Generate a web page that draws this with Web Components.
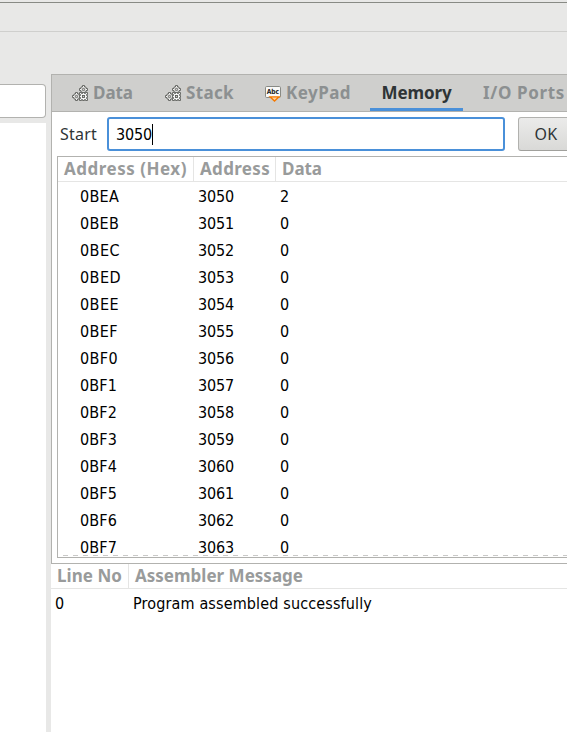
<!DOCTYPE html>
<html lang="en"><head><meta charset="utf-8"><title>Memory</title>
<style>html,body{margin:0;height:732px;overflow:hidden;background:#e8e8e7}</style></head>
<body><sim-window></sim-window>
<script>
const define=(name,html,init)=>customElements.define(name,class extends HTMLElement{
  connectedCallback(){
    if(this.shadowRoot)return;
    const t=document.createElement('template');t.innerHTML=html;
    this.attachShadow({mode:'open'}).append(t.content.cloneNode(true));
    if(init)init.call(this,this.shadowRoot);
  }
});

// Single-line label whose tracking is adjusted to reach the width in "w".
define('ui-label',`<style>:host{display:inline-block;white-space:pre;line-height:20px}span{display:inline-block}</style><span><slot></slot></span>`,
function(r){
  const w=+this.getAttribute('w');if(!w)return;
  const s=r.querySelector('span'),n=this.textContent.length;
  s.style.letterSpacing=((w-s.getBoundingClientRect().width)/n)+'px';
});

define('gears-icon',`<style>:host{display:block;width:16px;height:17px}svg{display:block}</style>
<svg width="16" height="17" viewBox="0 0 16 17">
<g fill="#f4f4f3" stroke="#5c5e5a" stroke-width=".9">
<path d="M10.500 .5h2v1.500h1.500v1.500h1.500v2H14V7h-1.500v1.500h-2V7H9V5.500H7.500v-2H9V2h1.500z"/>
<path d="M3.500 7.500h2V9H7v1.500h1.500v2H7V14H5.500v1.500h-2V14H2v-1.500H.5v-2H2V9h1.500z"/>
<path d="M7.500 7.500h2v1h1v-1h2v1h1v-1h2v2h-1v1h1v2h-1v1h1v2h-2v-1h-1v1h-2v-1h-1v1h-2v-2h1v-1h-1v-2h1v-1h-1z"/></g>
<g fill="#cfcfcd" stroke="#5c5e5a" stroke-width=".9"><circle cx="11.500" cy="4.500" r="1.200"/><circle cx="4.500" cy="11.500" r="1.200"/><rect x="10.500" y="10.500" width="2" height="2"/></g></svg>`);

define('keypad-icon',`<style>:host{display:block;width:16px;height:17px}svg{display:block}text{font:bold 7px "DejaVu Sans Condensed","DejaVu Sans",sans-serif;fill:#222}</style>
<svg width="16" height="17" viewBox="0 0 16 17"><rect x=".5" y="1.500" width="15" height="11" rx="1.200" fill="#fafaf8" stroke="#888a85"/>
<text x="1.700" y="9.200" textLength="12.500" lengthAdjust="spacingAndGlyphs">Abc</text>
<path d="M5 11.800h9L9.500 16z" fill="#fcd0a0" stroke="#f57900" stroke-width="1.300"/></svg>`);

define('tab-bar',`<style>:host{display:block;height:36px;background:#cfcfcd;border-top:1px solid #b2b2af;border-bottom:1px solid #b2b2af;overflow:hidden}
nav{display:flex;height:36px;padding-left:20px}
div{display:flex;align-items:center;flex:none;box-sizing:border-box;gap:5px;color:#8c9091;font:bold 17px "Noto Sans",sans-serif}
.active{color:#2e3436;border-bottom:3px solid #4a90d9;width:93px;justify-content:center;padding-top:3px}
.io{width:110px;padding-left:20px}</style>
<nav><div style="width:93px"><gears-icon></gears-icon><ui-label w="40">Data</ui-label></div>
<div style="width:100px"><gears-icon></gears-icon><ui-label w="48">Stack</ui-label></div>
<div style="width:105px"><keypad-icon></keypad-icon><ui-label w="65">KeyPad</ui-label></div>
<div class="active"><ui-label w="70">Memory</ui-label></div>
<div class="io"><ui-label w="82">I/O Ports</ui-label></div></nav>`);

define('search-row',`<style>:host{display:flex;box-sizing:content-box;height:34px;padding:5px 0 5px 8px;font:16px "Noto Sans",sans-serif;color:#2e3436;align-items:center}
.start{width:47px;flex:none}
.field{flex:none;width:398px;height:34px;box-sizing:border-box;border:2px solid #4a90d9;border-radius:3px;display:flex;align-items:center;padding:1px 0 0 7px;color:#000;background:#fff;font-family:"DejaVu Sans Condensed",sans-serif}
.caret{width:1px;height:21px;background:#000}
.ok{flex:none;margin-left:13px;width:56px;height:34px;box-sizing:border-box;border:1px solid #b1b1ae;border-bottom-color:#a0a09c;border-radius:3px;background:linear-gradient(#ebebea,#d9d9d7);display:flex;align-items:center;justify-content:center}</style>
<ui-label class="start" w="37">Start</ui-label><div class="field"><ui-label w="36">3050</ui-label><i class="caret"></i></div><div class="ok"><ui-label w="23">OK</ui-label></div>`);

const head=`.head{display:flex;height:24px;border-bottom:1px solid #e5e5e4;color:#999b9b;font:bold 17px "Noto Sans",sans-serif;align-items:center}
.head>div{height:24px;display:flex;align-items:center;box-sizing:border-box;flex:none}.sep{border-right:1px solid #e5e5e4}`;

define('memory-table',`<style>:host{display:block;height:400px;margin-left:5px;border:1px solid #b2b2af;border-right:0;background:#fff;overflow:hidden;position:relative}
${head}
.rows{padding-top:1px}
.row{display:grid;grid-template-columns:118px 82px 1fr;padding-left:22px;height:27px;align-items:center;color:#000;font:16px "DejaVu Sans Condensed",sans-serif}
.more{position:absolute;left:5px;right:0;top:398px;height:1px;background:repeating-linear-gradient(90deg,#c9c9c8 0 5px,transparent 5px 10px)}</style>
<div class="head"><div class="sep" style="width:136px;padding-left:6px"><ui-label w="123">Address (Hex)</ui-label></div><div class="sep" style="width:82px;padding-left:6px"><ui-label w="70">Address</ui-label></div><div style="padding-left:6px"><ui-label w="40">Data</ui-label></div></div>
<div class="rows"></div><div class="more"></div>`,
function(r){
  const box=r.querySelector('.rows');
  const widths=[39,39,40,41,39,38,38,37,37,37,37,37,37,37];
  for(let i=0;i<14;i++){
    const d=document.createElement('div');d.className='row';
    d.innerHTML=`<ui-label w="${widths[i]}">0${(3050+i).toString(16).toUpperCase()}</ui-label><ui-label w="36">${3050+i}</ui-label><ui-label w="9">${i?0:2}</ui-label>`;
    box.append(d);
  }
});

define('message-list',`<style>:host{display:block;background:#fff;height:168px}
${head}
.row{display:flex;height:28px;align-items:center;padding-left:4px;color:#000;font:16px "DejaVu Sans Condensed",sans-serif}</style>
<div class="head"><div class="sep" style="width:78px;padding-left:6px"><ui-label w="65">Line No</ui-label></div><div style="padding-left:6px"><ui-label w="168">Assembler Message</ui-label></div></div>
<div class="row" style="padding-top:1px"><ui-label w="9" style="width:78px">0</ui-label><ui-label w="239">Program assembled successfully</ui-label></div>`);

define('editor-side',`<style>:host{display:flex;flex-direction:column;width:46px;padding-top:10px;box-sizing:border-box;height:658px}
.field{height:34px;box-sizing:border-box;border:1px solid #b2b2af;border-left:0;border-radius:0 4px 4px 0;background:#fff}
.page{margin-top:5px;flex:1;background:#fff}</style><div class="field"></div><div class="page"></div>`);

define('sim-window',`<style>:host{display:block;width:567px;height:732px;overflow:hidden;background:#e8e8e7}
.title{height:2px;border-bottom:1px solid #888a85}.bar{height:28px;border-bottom:1px solid #cfcfcd}
main{display:grid;grid-template-columns:46px 516px;column-gap:5px;margin-top:42px}
.panel{border-left:1px solid #b2b2af;border-bottom:1px solid #b2b2af;background:#fff;height:489px;overflow:hidden}</style>
<div class="title"></div><div class="bar"></div><main><editor-side></editor-side>
<section><div class="panel"><tab-bar></tab-bar><search-row></search-row><memory-table></memory-table></div><message-list></message-list></section></main>`);
</script></body></html>
